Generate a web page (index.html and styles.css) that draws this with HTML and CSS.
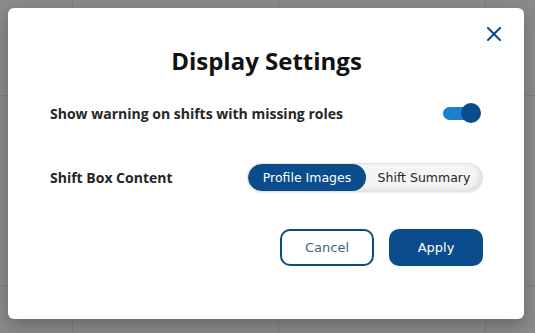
FILE: index.html
```html
<!DOCTYPE html>
<html lang="en">
<head>
    <meta charset="UTF-8">
    <meta name="viewport" content="width=device-width, initial-scale=1.0">
    <title>Display Settings</title>
    <link rel="stylesheet" href="styles.css">
</head>
<body>
    <div class="modal">
        <button class="modal-close" aria-label="Close">
            <svg width="14" height="14" viewBox="0 0 14 14">
                <path d="M1 1L13 13M13 1L1 13" stroke="#0b4a85" stroke-width="2" stroke-linecap="round"/>
            </svg>
        </button>

        <h1 class="modal-title">Display Settings</h1>

        <div class="setting-row row-warning">
            <span class="setting-label">Show warning on shifts with missing roles</span>
            <label class="toggle">
                <span class="toggle-track"></span>
                <span class="toggle-knob"></span>
            </label>
        </div>

        <div class="setting-row row-content">
            <span class="setting-label">Shift Box Content</span>
            <div class="segmented">
                <button class="segment active">Profile Images</button>
                <button class="segment">Shift Summary</button>
            </div>
        </div>

        <div class="modal-actions">
            <button class="btn btn-outline">Cancel</button>
            <button class="btn btn-primary">Apply</button>
        </div>
    </div>
</body>
</html>
```

FILE: styles.css
```css
* {
    margin: 0;
    padding: 0;
    box-sizing: border-box;
}

:root {
    --navy: #0b4d8c;
    --navy-dark: #0a4a85;
    --blue-light: #1b7fd0;
    --text: #262626;
    --backdrop: #8a8a8a;
    --grid-line: #7e7e7e;
}

body {
    font-family: "DejaVu Sans", "Open Sans", sans-serif;
    width: 535px;
    height: 333px;
    overflow: hidden;
    padding: 8px 11px 14px 8px;
    background-color: var(--backdrop);
    background-image:
        linear-gradient(90deg, transparent 72px, var(--grid-line) 72px, var(--grid-line) 73px, transparent 73px),
        linear-gradient(90deg, transparent 278px, var(--grid-line) 278px, var(--grid-line) 279px, transparent 279px),
        linear-gradient(90deg, transparent 485px, var(--grid-line) 485px, var(--grid-line) 486px, transparent 486px),
        linear-gradient(180deg, transparent 95px, var(--grid-line) 95px, var(--grid-line) 96px, transparent 96px),
        linear-gradient(180deg, transparent 285px, var(--grid-line) 285px, var(--grid-line) 286px, transparent 286px);
}

.modal {
    position: relative;
    background: #ffffff;
    border-radius: 6px;
    width: 516px;
    height: 311px;
    padding: 38px 41px 0 42px;
    box-shadow: 0 6px 16px rgba(0, 0, 0, 0.25);
}

.modal-close {
    position: absolute;
    top: 19px;
    right: 23px;
    width: 14px;
    height: 14px;
    border: none;
    background: none;
    display: flex;
}

.modal-title {
    font-family: "Open Sans", "DejaVu Sans", sans-serif;
    font-size: 24px;
    line-height: 30px;
    font-weight: 700;
    color: #111;
    text-align: center;
}

.setting-row {
    display: flex;
    align-items: center;
    justify-content: space-between;
}

.row-warning {
    margin-top: 27px;
    height: 20px;
}

.row-content {
    margin-top: 40px;
    height: 29px;
}

.setting-label {
    font-family: "Open Sans", "DejaVu Sans", sans-serif;
    font-size: 14px;
    font-weight: 700;
    color: var(--text);
}

/* Toggle */
.toggle {
    position: relative;
    width: 38px;
    height: 20px;
    display: flex;
    align-items: center;
    margin-right: 2px;
}

.toggle-track {
    width: 30px;
    height: 13px;
    border-radius: 7px;
    background: var(--blue-light);
}

.toggle-knob {
    position: absolute;
    right: 0;
    top: 0;
    width: 20px;
    height: 20px;
    border-radius: 50%;
    background: var(--navy);
}

/* Segmented control */
.segmented {
    display: flex;
    width: 236px;
    height: 29px;
    border-radius: 15px;
    background: #f4f4f4;
    border: 1px solid #e2e2e2;
    box-shadow: inset -3px -2px 4px rgba(0, 0, 0, 0.08), 0 1px 2px rgba(0, 0, 0, 0.08);
    overflow: hidden;
}

.segment {
    border: none;
    background: none;
    font-family: inherit;
    font-size: 12.5px;
    color: var(--text);
    border-radius: 14px;
    flex: 1;
}

.segment.active {
    flex: 0 0 118px;
    background: var(--navy);
    color: #ffffff;
}

/* Actions */
.modal-actions {
    display: flex;
    justify-content: flex-end;
    gap: 15px;
    margin-top: 37px;
}

.btn {
    width: 94px;
    height: 37px;
    border-radius: 10px;
    font-family: inherit;
    font-size: 13px;
}

.btn-outline {
    background: #ffffff;
    border: 2px solid var(--navy-dark);
    color: #4a5f78;
}

.btn-primary {
    background: var(--navy);
    border: none;
    color: #ffffff;
}
```
